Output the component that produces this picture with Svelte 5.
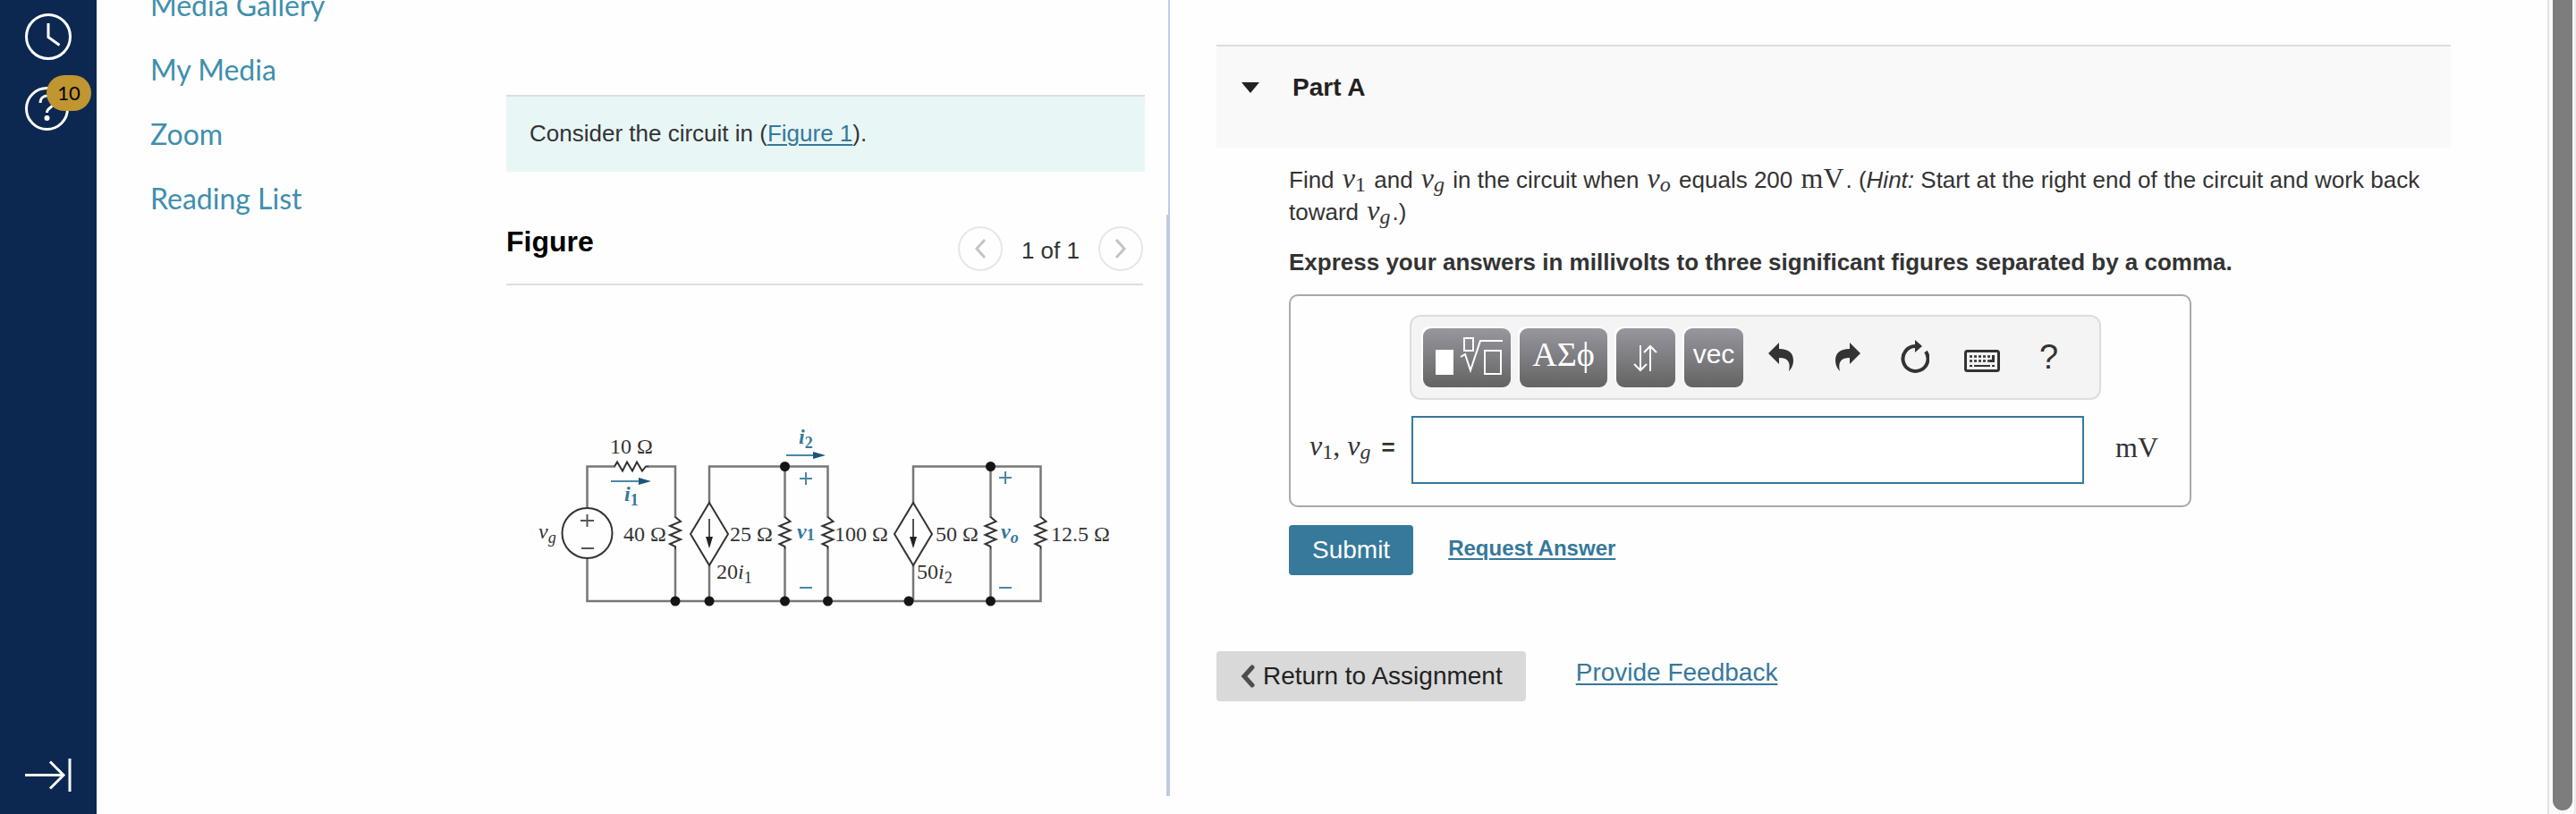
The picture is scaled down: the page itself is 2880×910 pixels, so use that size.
<script>
    let answer = "";
    let open = true;

    const courseLinks = ["Media Gallery", "My Media", "Zoom", "Reading List"];

    const wires = [
        "M656.5 568V521.5H688M724 521.5H755V579",
        "M656.5 624V672H1163.5V614",
        "M793 562V521.5H925.5V579M877.5 521.5V579",
        "M1021 562V521.5H1163.5V579M1107.5 521.5V579",
        "M755 614V672M793 632V672M877.5 614V672",
        "M925.5 614V672M1021 632V672M1107.5 614V672",
    ];
    const resistors = [755, 877.5, 925.5, 1107.5, 1163.5];
    const sources = [793, 1021];
    const nodes = [
        [755, 672],
        [793, 672],
        [877.5, 672],
        [925.5, 672],
        [1016, 672],
        [1107.5, 672],
        [877.5, 521.5],
        [1107.5, 521.5],
    ];
</script>

<div class="page">
    <aside class="rail">
        <button aria-label="History">
            <svg width="52" height="52" fill="none" stroke="#fff" stroke-width="3">
                <circle cx="26" cy="26" r="24.5" />
                <path d="M26 11v15.500l12.500 9" />
            </svg>
        </button>
        <button aria-label="Help" class="help">
            <svg width="50" height="50" fill="none" stroke="#fff" stroke-width="3">
                <circle cx="24.500" cy="24.500" r="23" />
                <path d="M17 18c0-5 3.500-8 8-8s8 3 8 7c0 6-8.500 5.500-8.500 12" />
                <circle cx="24.500" cy="35" r="3" fill="#fff" stroke="none" />
            </svg>
            <span class="badge">10</span>
        </button>
        <button aria-label="Expand navigation" class="expand">
            <svg width="52" height="38" fill="none" stroke="#fff" stroke-width="3">
                <path d="M0 18.500h43M28 3.500l15 15-15 15" />
                <path d="M50 0v37" />
            </svg>
        </button>
    </aside>

    <nav>
        {#each courseLinks as link}
            <a href="#course">{link}</a>
        {/each}
    </nav>

    <main>
        <section class="left">
            <p class="intro">
                Consider the circuit in (<a href="#figure">Figure 1</a>).
            </p>
            <div class="figure" id="figure">
                <header>
                    <h2>Figure</h2>
                    <div class="pager">
                        <button aria-label="Previous figure">
                            <svg width="14" height="22"><path d="M12 1L3 11l9 10" /></svg>
                        </button>
                        <span>1 of 1</span>
                        <button aria-label="Next figure">
                            <svg width="14" height="22"><path d="M2 1l9 10-9 10" /></svg>
                        </button>
                    </div>
                </header>
                <svg class="circuit" viewBox="566 470 712 220" role="img" aria-label="Circuit">
                    <g class="wire">
                        {#each wires as d}
                            <path {d} />
                        {/each}
                    </g>
                    <g class="part">
                        <circle cx="656.500" cy="596" r="28" />
                        <path d="M649 582h15M656.500 575v14M650 613h14" class="sign" />
                        <path d="M687 521.500l3-5 6 10 5-10 6 10 5-10 6 10 4-5h3" />
                        {#each resistors as x}
                            <path
                                transform="translate({x} 578)"
                                d="M0 0l6 5-12 5 12 5-12 5 12 5-12 5 6 3v3"
                            />
                        {/each}
                        {#each sources as x}
                            <path transform="translate({x} 562)" d="M0 0l21 35-21 35-21-35z" />
                            <path transform="translate({x} 580)" d="M0 0v20" class="sign" />
                            <path transform="translate({x} 600)" d="M-4 0h8l-4 13z" class="tip" />
                        {/each}
                    </g>
                    {#each nodes as [cx, cy]}
                        <circle {cx} {cy} r="5.5" fill="#151515" />
                    {/each}
                    <g class="flow">
                        <path d="M683 538h32M879 509h32" />
                        <path d="M714 534l14 4-14 4zM909 505l14 4-14 4z" class="head" />
                        <path d="M894 535h14M901 528v14M894 657h14M1117 534h14M1124 527v14M1117 657h14" />
                    </g>
                    <g class="value">
                        <text x="682" y="507">10 Ω</text>
                        <text x="697" y="605">40 Ω</text>
                        <text x="816" y="605">25 Ω</text>
                        <text x="933" y="605">100 Ω</text>
                        <text x="1046" y="605">50 Ω</text>
                        <text x="1175" y="605">12.5 Ω</text>
                        <text x="801" y="647">20<tspan class="it">i</tspan><tspan class="sub" dy="5">1</tspan></text>
                        <text x="1025" y="647">50<tspan class="it">i</tspan><tspan class="sub" dy="5">2</tspan></text>
                        <text x="602" y="602" class="it">v<tspan class="sub" dy="5">g</tspan></text>
                    </g>
                    <g class="value blue">
                        <text x="698" y="560"><tspan class="it">i</tspan><tspan class="sub" dy="5">1</tspan></text>
                        <text x="893" y="496"><tspan class="it">i</tspan><tspan class="sub" dy="5">2</tspan></text>
                        <text x="891" y="602"><tspan class="it">v</tspan><tspan class="sub" dy="2">1</tspan></text>
                        <text x="1119" y="602" class="it">v<tspan class="sub" dy="5">o</tspan></text>
                    </g>
                </svg>
            </div>
        </section>

        <section class="right">
            <button class="part-head" aria-expanded={open} on:click={() => (open = !open)}>
                <svg width="20" height="12"><path d="M0 0h20L10 12z" fill="#222" /></svg>
                Part A
            </button>
            {#if open}
                <div class="part-body">
                    <p>
                        Find <span class="math"><i>v</i><sub>1</sub></span> and
                        <span class="math"><i>v</i><sub><i>g</i></sub></span> in the circuit when
                        <span class="math"><i>v</i><sub><i>o</i></sub></span> equals 200
                        <span class="math">mV</span>. (<em>Hint:</em> Start at the right end of the
                        circuit and work back toward
                        <span class="math"><i>v</i><sub><i>g</i></sub></span>.)
                    </p>
                    <p class="express">
                        Express your answers in millivolts to three significant figures separated by a comma.
                    </p>

                    <div class="answer">
                        <div class="toolbar">
                            <button class="key wide" aria-label="Templates">
                                <svg width="98" height="66" fill="none" stroke="#fff" stroke-width="2">
                                    <rect x="14" y="24" width="20" height="28" fill="#fff" stroke="none" />
                                    <rect x="46" y="11" width="10" height="14" />
                                    <path d="M42 32l5-3 6 18 11-33h25" />
                                    <rect x="69" y="25" width="18" height="26" />
                                </svg>
                            </button>
                            <button class="key wide greek">ΑΣϕ</button>
                            <button class="key" aria-label="Arrows">
                                <svg width="66" height="66" fill="none" stroke="#fff" stroke-width="2">
                                    <path d="M27 19v28M20 40l7 7 7-7M38 48V20M31 27l7-7 7 7" />
                                </svg>
                            </button>
                            <button class="key vec">vec</button>
                            <div class="tools">
                                <button aria-label="Undo">
                                    <svg width="28" height="32">
                                        <path d="M0 12L12 0v7c11 0 16 5 16 13 0 5-2 9-5 12 2-9 0-15-11-15v7z" />
                                    </svg>
                                </button>
                                <button aria-label="Redo">
                                    <svg width="28" height="32">
                                        <path d="M28 12L16 0v7C5 7 0 12 0 20c0 5 2 9 5 12-2-9 0-15 11-15v7z" />
                                    </svg>
                                </button>
                                <button aria-label="Reset">
                                    <svg width="32" height="38">
                                        <path
                                            d="M16 7A14 14 0 1 0 28 13"
                                            fill="none"
                                            stroke="#333"
                                            stroke-width="4"
                                        />
                                        <path d="M16 0l8 7-8 7z" />
                                    </svg>
                                </button>
                                <button aria-label="Keyboard shortcuts" class="low">
                                    <svg width="40" height="25">
                                        <rect x="1.500" y="1.500" width="37" height="22" rx="2" fill="none" stroke="#333" stroke-width="3" />
                                        <path
                                            d="M6 7.500h25M6 12.500h25"
                                            fill="none"
                                            stroke="#333"
                                            stroke-width="2.500"
                                            stroke-dasharray="3 2"
                                        />
                                        <path d="M31 6h3v8h-5v-3h2zM6 17h3v2H6zM11 17h18v2H11zM31 17h3v2h-3z" />
                                    </svg>
                                </button>
                                <button class="question">?</button>
                            </div>
                        </div>
                        <label for="answer" class="math">
                            <i>v</i><sub>1</sub>, <i>v</i><sub><i>g</i></sub> <b>=</b>
                        </label>
                        <div class="entry">
                            <input id="answer" type="text" bind:value={answer} />
                            <span class="math">mV</span>
                        </div>
                    </div>

                    <div class="actions">
                        <button class="submit">Submit</button>
                        <a href="#answer">Request Answer</a>
                    </div>
                </div>
            {/if}
            <footer>
                <button>
                    <svg width="18" height="26"><path d="M14 3L5 13l9 10" /></svg>
                    Return to Assignment
                </button>
                <a href="#feedback">Provide Feedback</a>
            </footer>
        </section>
    </main>

    <div class="scroll"><div class="thumb"></div></div>
</div>

<style>
    :global(body) {
        background: #fefefe;
    }

    .page {
        display: flex;
        min-height: 100vh;
        overflow: hidden;
        font-family: "Liberation Sans", Arial, sans-serif;
        font-size: 26px;
        line-height: 36px;
        color: #333;
    }

    button {
        font: inherit;
        color: inherit;
        border: none;
        background: none;
        padding: 0;
        cursor: pointer;
    }

    svg {
        display: block;
    }

    p,
    h2 {
        margin: 0;
    }

    a {
        color: #36799a;
        text-decoration-thickness: 2px;
        text-underline-offset: 3px;
    }

    .rail {
        display: flex;
        flex-direction: column;
        align-items: flex-start;
        gap: 30px;
        flex: 0 0 80px;
        padding: 15px 0 24px 28px;
        background: #0c2850;
    }

    .help {
        position: relative;
    }

    .badge {
        position: absolute;
        left: 24px;
        top: -13px;
        width: 50px;
        height: 40px;
        border-radius: 20px;
        background: #bf9630;
        color: #000;
        font: 22px/40px Lato, sans-serif;
    }

    .expand {
        margin-top: auto;
    }

    nav {
        display: flex;
        flex-direction: column;
        flex: 0 0 398px;
        margin-top: -30px;
        padding-left: 60px;
        font: 32px/72px Lato, sans-serif;
    }

    nav a {
        color: #3f8fac;
        text-decoration: none;
    }

    main {
        display: grid;
        grid-template-columns: 742fr 1540fr;
        flex: 1;
    }

    .left {
        display: flex;
        flex-direction: column;
        margin-bottom: 20px;
        border-right: 2px solid #bfccdf;
    }

    .intro {
        margin: 106px 26px 48px 0;
        padding: 23px 26px 25px;
        border-top: 2px solid #ddd;
        background: #e8f6f6;
    }

    .figure {
        flex: 1;
        padding-right: 26px;
        border-right: 2px solid #bfccdf;
    }

    .figure header {
        display: flex;
        justify-content: space-between;
        padding: 13px 0 14px;
        border-bottom: 2px solid #ddd;
    }

    h2 {
        font-size: 32px;
        line-height: 34px;
        color: #000;
    }

    .pager {
        display: flex;
        align-items: center;
        gap: 21px;
    }

    .pager span {
        padding-top: 4px;
    }

    .pager button {
        display: grid;
        place-items: center;
        width: 50px;
        height: 50px;
        border: 2px solid #e6e6e6;
        border-radius: 50%;
    }

    .pager path {
        fill: none;
        stroke: #c4c4c4;
        stroke-width: 3;
    }

    .circuit {
        width: 100%;
        margin-top: 151px;
        font-family: "Liberation Serif", "Times New Roman", serif;
    }

    .wire {
        fill: none;
        stroke: #777;
        stroke-width: 2.5;
    }

    .part {
        fill: none;
        stroke: #333;
        stroke-width: 2;
    }

    .part .sign {
        stroke: #555;
    }

    .part .tip {
        fill: #222;
        stroke: none;
    }

    .flow {
        fill: none;
        stroke: #4a86a8;
        stroke-width: 2;
    }

    .flow .head {
        fill: #1c5578;
        stroke: none;
    }

    .value {
        font-size: 24px;
        fill: #333;
    }

    .value .it {
        font-style: italic;
    }

    .value .sub {
        font-size: 18px;
    }

    .blue {
        fill: #36799a;
        font-weight: bold;
    }

    .right {
        padding: 50px 108px 0 52px;
    }

    .part-head {
        display: flex;
        align-items: center;
        gap: 37px;
        width: 100%;
        padding: 28px 28px 49px;
        border-top: 2px solid #ddd;
        background: #f9f9f9;
        font-size: 28px;
        font-weight: bold;
        color: #222;
    }

    .part-body {
        padding: 18px 0 0 81px;
    }

    .math {
        font-family: "Liberation Serif", "Times New Roman", serif;
        font-size: 32px;
        line-height: 32px;
    }

    p .math {
        padding: 0 2px;
    }

    .math sub {
        font-size: 24px;
        line-height: 16px;
        vertical-align: -4px;
    }

    .express {
        margin: 20px 0 18px;
        font-weight: bold;
    }

    .answer {
        display: grid;
        grid-template-columns: 133px minmax(0, 773px) 1fr;
        row-gap: 18px;
        align-items: center;
        box-sizing: border-box;
        max-width: 1009px;
        padding: 21px 0 24px;
        border: 2px solid #a9a9a9;
        border-radius: 10px;
    }

    .toolbar {
        grid-column: 2;
        display: flex;
        gap: 10px;
        padding: 13px 13px 12px;
        border: 2px solid #ddd;
        border-radius: 12px;
        background: #f4f4f4;
    }

    .key {
        width: 66px;
        height: 66px;
        border-radius: 9px;
        background: linear-gradient(#98969f, #636363);
        box-shadow: -2px -2px 0 #fff;
        color: #fff;
    }

    .wide {
        width: 98px;
    }

    .greek {
        padding-bottom: 8px;
        font-family: "Liberation Serif", serif;
        font-size: 38px;
    }

    .vec {
        padding-bottom: 8px;
        font-size: 30px;
    }

    .tools {
        display: flex;
        margin-left: -6px;
    }

    .tools button {
        display: grid;
        place-items: center;
        width: 75px;
        height: 64px;
    }

    .tools svg {
        fill: #333;
    }

    .tools .low {
        padding-top: 8px;
    }

    .tools .question {
        font-size: 38px;
    }

    label {
        grid-column: 1;
        padding: 0 0 8px 21px;
        white-space: nowrap;
    }

    label b {
        margin-left: 4px;
        font: bold 26px "Liberation Sans", sans-serif;
    }

    .entry {
        grid-column: 2 / 4;
        display: flex;
        align-items: center;
        gap: 35px;
        padding: 0 35px 0 2px;
    }

    .entry span {
        padding-bottom: 6px;
    }

    input {
        box-sizing: border-box;
        flex: 1;
        min-width: 0;
        height: 76px;
        padding: 0 12px;
        border: 2px solid #36799a;
        background: #fff;
        font: inherit;
    }

    .actions {
        display: flex;
        align-items: center;
        gap: 39px;
        margin-top: 20px;
    }

    .submit {
        height: 56px;
        padding: 0 26px;
        border-radius: 4px;
        background: #36799a;
        color: #fff;
        font-size: 28px;
    }

    .actions a {
        padding-bottom: 4px;
        font-size: 24px;
        font-weight: bold;
    }

    footer {
        display: flex;
        align-items: center;
        gap: 56px;
        margin-top: 85px;
        font-size: 28px;
    }

    footer button {
        display: flex;
        align-items: center;
        gap: 8px;
        height: 56px;
        padding: 0 26px;
        border-radius: 4px;
        background: #d9d9d9;
        color: #222;
    }

    footer path {
        fill: none;
        stroke: #4d4d4d;
        stroke-width: 5;
        stroke-linecap: round;
    }

    footer a {
        padding-bottom: 8px;
    }

    .scroll {
        display: flex;
        box-sizing: border-box;
        width: 32px;
        padding: 0 2px 4px 4px;
        border-left: 2px solid #e2e2e2;
        border-right: 2px solid #ececec;
        background: #fafafa;
    }

    .thumb {
        flex: 1;
        border-radius: 0 0 11px 11px;
        background: #7d7d7d;
    }
</style>
